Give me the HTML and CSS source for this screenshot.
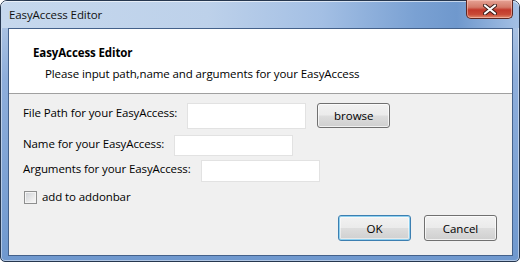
FILE: index.html
```html
<!DOCTYPE html>
<html lang="en">
<head>
  <meta charset="UTF-8">
  <title>EasyAccess Editor</title>
  <link rel="stylesheet" href="styles.css">
</head>
<body>
  <div class="window">
    <div class="titlebar">
      <span class="title">EasyAccess Editor</span>
      <button class="close" title="Close">
        <svg width="14" height="11" viewBox="0 0 14 11">
          <path d="M2 1.5 L12 9.5 M12 1.5 L2 9.5" stroke="#3a1c18" stroke-width="4" stroke-linecap="round"/>
          <path d="M2 1.5 L12 9.5 M12 1.5 L2 9.5" stroke="#fff" stroke-width="2.2" stroke-linecap="round"/>
        </svg>
      </button>
    </div>

    <div class="client">
      <div class="banner">
        <div class="banner-title">EasyAccess Editor</div>
        <div class="banner-desc">Please input path,name and arguments for your EasyAccess</div>
      </div>

      <div class="form">
        <div class="row row-path">
          <label class="label">File Path for your EasyAccess:</label>
          <input type="text" class="field">
          <button class="btn">browse</button>
        </div>
        <div class="row row-name">
          <label class="label">Name for your EasyAccess:</label>
          <input type="text" class="field">
        </div>
        <div class="row row-args">
          <label class="label">Arguments for your EasyAccess:</label>
          <input type="text" class="field">
        </div>
        <label class="check">
          <span class="check-box"></span>
          <span>add to addonbar</span>
        </label>

        <div class="actions">
          <button class="btn btn-default">OK</button>
          <button class="btn">Cancel</button>
        </div>
      </div>
    </div>
  </div>
</body>
</html>
```

FILE: styles.css
```css
/* Page */
body {
  margin: 0;
  background: #fff;
  font-family: 'Open Sans', 'Noto Sans', sans-serif;
  font-size: 11.5px;
  letter-spacing: -0.1px;
  color: #000;
}

/* Window frame */
.window {
  width: 520px;
  height: 262px;
  box-sizing: border-box;
  display: flex;
  flex-direction: column;
  padding: 0 6px 5px 7px;
  border: 1px solid #26374f;
  border-radius: 7px 7px 5px 5px;
  background: linear-gradient(180deg, #b7cce7 0%, #8eaedb 30%, #6f98ce 100%);
  box-shadow: inset 0 0 0 1px rgba(255, 255, 255, 0.45);
}

/* Title bar */
.titlebar {
  height: 27px;
  margin: 0 -6px 0 -7px;
  padding-left: 8px;
  display: flex;
  justify-content: space-between;
  align-items: flex-start;
  border-radius: 6px 6px 0 0;
  background: linear-gradient(90deg, #c6d8ed 0%, #bdd1ea 40%, #a3bfe4 62%, #7aa1d3 80%, #6f98cd 88%, #a4c0e4 100%);
  box-shadow: inset 0 1px 0 rgba(255, 255, 255, 0.6);
}
.title {
  margin-top: 6px;
  line-height: 16px;
  color: #111;
}
.close {
  width: 47px;
  height: 19px;
  margin: -1px 6px 0 0;
  padding: 0;
  display: flex;
  align-items: center;
  justify-content: center;
  border: 1px solid #5d2722;
  border-top: none;
  border-radius: 0 0 5px 5px;
  background: linear-gradient(180deg, #e6a395 0%, #d47a69 40%, #c2392b 55%, #c84a36 80%, #e08c6e 100%);
  box-shadow: inset 0 0 0 1px rgba(255, 210, 200, 0.5);
}

/* Client area */
.client {
  flex: 1;
  display: flex;
  flex-direction: column;
  border: 1px solid #44618a;
  background: #f0f0f0;
}

.banner {
  height: 65px;
  box-sizing: border-box;
  padding: 16px 0 0 24px;
  background: #fff;
  border-bottom: 1px solid #a0a0a0;
}
.banner-title {
  font-weight: bold;
  line-height: 16px;
}
.banner-desc {
  margin: 5px 0 0 12px;
  line-height: 16px;
}

/* Form */
.form {
  flex: 1;
  display: flex;
  flex-direction: column;
  padding: 9px 15px 14px 14px;
}
.row {
  display: flex;
  align-items: flex-start;
  gap: 10px;
}
.label {
  line-height: 16px;
}
.field {
  width: 119px;
  height: 21px;
  box-sizing: border-box;
  margin: 0;
  border: 1px solid #e2e2e2;
  background: #fff;
  font: inherit;
}
.row-path .label { margin-top: 2px; }
.row-path .field { height: 26px; }
.row-path .btn { margin-left: 1px; }
.row-name { margin-top: 6px; }
.row-args { margin-top: 4px; }
.row-name .label,
.row-args .label { margin-top: 1px; }
.row-args .field { height: 22px; }

.check {
  margin: 7px 0 0 1px;
  display: flex;
  align-items: center;
  gap: 5px;
  line-height: 16px;
}
.check-box {
  width: 13px;
  height: 13px;
  box-sizing: border-box;
  border: 1px solid #8e8f8f;
  background: linear-gradient(135deg, #cdd0d5 0%, #eeeeee 70%, #fafafa 100%);
  box-shadow: inset 0 0 0 1px #f4f4f4;
}

/* Buttons */
.btn {
  width: 73px;
  height: 25px;
  margin: 0;
  padding: 0;
  font: inherit;
  color: #000;
  border: 1px solid #707070;
  border-radius: 3px;
  background: linear-gradient(180deg, #f2f2f2 0%, #ebebeb 48%, #dddddd 52%, #cfcfcf 100%);
  box-shadow: inset 0 0 0 1px rgba(255, 255, 255, 0.7);
}
.actions {
  margin-top: auto;
  display: flex;
  justify-content: flex-end;
  gap: 13px;
}
.actions .btn { height: 26px; }
.btn-default {
  border-color: #3c7fb1;
  box-shadow: inset 0 0 0 1px #8fd0ef, inset 0 0 0 2px rgba(255, 255, 255, 0.5);
}
```
